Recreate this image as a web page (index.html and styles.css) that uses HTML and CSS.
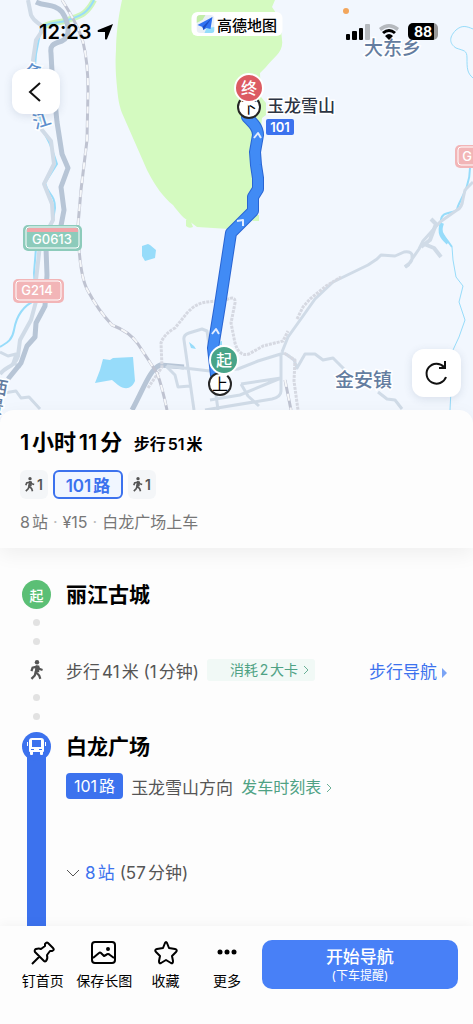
FILE: index.html
```html
<!DOCTYPE html>
<html lang="zh-CN">
<head>
    <meta charset="utf-8">
    <meta name="viewport" content="width=device-width, initial-scale=1.0">
    <title>公交路线详情</title>
    <link rel="stylesheet" href="styles.css">
</head>
<body>
<div class="m-page">
    <div class="m-map">
        <svg class="map-canvas" viewBox="0 0 473 422">
            <rect class="land" width="473" height="422"/>
            <!-- 绿地 -->
            <path class="park" d="M122 0C118 18 116 36 116 50C115 66 116 76 117 87C118 98 119 105 122 113L147 170C155 186 164 198 173 205C179 213 184 219 189 221L197 227L229 229L257 219L258 160L262 118L266 115V103L261 97L260 73L266 67C273 58 284 52 282 40C281 28 280 18 272 7L275 0Z"/>
            <path class="park" d="M186 220q4-3 5 2l2 5q-4 2-7-1zM252 215h7v6h-6z"/>
            <!-- 河流湖泊 -->
            <path class="lake" d="M142 246l6-2 2 1 6 5-1 8-10 3-3-5zM103 359l7 1 3-2 20-1 1 12 1 12c-3 7-9 10-17 4l-6-5-17 3 5-13zM189 342l5 4 2 3-5-1zM219 342l3-1v4h-3z"/>
            <path class="grass-river" d="M94 0C86 16 78 16 68 20C58 24 50 21 42 28"/>
            <path class="river w2" d="M94 0C86 16 78 16 68 20C58 24 50 21 41 28L36 54L34 80L42 130C52 144 54 156 57 164L45 183C48 195 55 194 55 208L53 220L36 248L34 273L36 300C22 306 16 318 14 330C12 342 4 344 0 347"/>
            <path class="river w1" d="M473 29C466 26 462 25 456 30C448 38 450 44 456 48C464 51 467 50 467 58C467 68 467 73 473 78"/>
            <path class="river w2" d="M470 168C470 190 457 203 457 210C452 214 442 211 441 220C438 232 446 238 452 247"/>
            <path class="river w4" d="M442 223C438 234 443 238 448 243"/>
            <path class="river w1" d="M452 247L453 260L456 277L463 286L459 302L465 320L459 337L453 350L450 410"/>
            <!-- 道路 -->
            <path class="road w4" d="M28 0L31 15C36 26 44 22 42 31L36 40L33 60L37 120L42 130L51 141L54 164L44 184L52 204L53 220L40 245L36 280L38 294L31 320L20 340L18 356C14 368 6 366 0 374"/>
            <path class="road w3" d="M0 352l8 4 8-2-3 9 8 4M4 393l12-2 5 7 8-1 11 12"/>
            <path class="road strong w5" d="M36 2C46 7 54 3 62 12C68 21 72 36 62 41C52 44 50 46 51 53L52 72L57 122L62 154L68 168L61 187L64 210L60 231L46 248L47 275L45 306L36 323L35 337L27 346L21 363L8 379"/>
            <path class="road strong w5" d="M132 410C143 390 150 369 160 365L184 367"/>
            <path class="road w3" d="M166 366L175 375L178 387L190 386M194 410L184 340Q183 335 189 333L202 329L207 331L214 380L218 410M167 366L210 371L238 369L258 361L284 353M210 400L240 395L281 378M281 355V391Q281 397 272 399L205 410M241 384L281 378M241 384L248 396L259 406"/>
            <path class="road w3" d="M282 352L288 337L303 316L315 299L333 282L368 265L377 259L381 255L395 256L404 252Q413 251 412 257Q413 262 405 267M408 265L419 249L423 241L440 222L457 210Q462 208 463 199L465 190L473 182"/>
            <path class="road w4" d="M421 247L430 240L436 224L431 219M424 244L434 248L441 257M405 267l4-3"/>
            <path class="road w3" d="M286 354L294 360L297 368L305 354L315 354L323 360L333 358L344 369M378 392L387 399L395 400L402 409"/>
            <path class="track w3" d="M148 388L162 367L161 343Q164 334 175 328L187 313Q196 303 207 302L226 300Q236 295 235 303L231 323L235 343Q239 357 249 354L263 346L283 341L288 331M297 319L303 307L310 299L326 286L341 277M284 353L295 360L294 381L298 410"/>
            <!-- 铁路 -->
            <path class="rail" d="M62 0Q78 25 83 42Q88 62 88 90L87 140L81 190L78 225Q79 276 88 291Q98 310 112 325Q130 332 138 344L157 373Q162 386 167 410M285 380L291 410"/>
            <path class="rail-dash" d="M62 0Q78 25 83 42Q88 62 88 90L87 140L81 190L78 225Q79 276 88 291Q98 310 112 325Q130 332 138 344L157 373Q162 386 167 410M285 380L291 410"/>
            <!-- 地名 -->
            <text class="place" x="335" y="387">金安镇</text>
            <text class="place" x="364" y="55">大东乡</text>
            <text class="water-name" transform="translate(26 80) rotate(-12)">金</text>
            <text class="water-name" transform="translate(35 129) rotate(-18)">江</text>
            <text class="side-name" transform="translate(-11 392) rotate(10)">西</text>
            <text class="side-name" transform="translate(-15 411) rotate(10)">景</text>
            <circle class="poi" cx="346" cy="11" r="3"/>
            <!-- 道路编号 -->
            <g class="shield green">
                <rect x="23" y="225" width="59" height="26" rx="5"/>
                <rect class="inner" x="26" y="227" width="53" height="21" rx="3"/>
                <path class="red-top" d="M27 232v-2q0-2 2-2h47q2 0 2 2v2z"/>
                <text x="52" y="244">G0613</text>
            </g>
            <g class="shield red">
                <rect x="13" y="279" width="51" height="24" rx="5"/>
                <rect class="inner" x="16" y="281" width="45" height="19" rx="3"/>
                <text x="37" y="295">G214</text>
            </g>
            <g class="shield red">
                <rect x="455" y="145" width="51" height="23" rx="5"/>
                <rect class="inner" x="458" y="147" width="45" height="18" rx="3"/>
                <text x="467" y="161">G</text>
            </g>
            <!-- 公交线路 -->
            <path class="route-edge" d="M247 117C254 124 258 128 258 135L255 152L256 165L258 178V189L253 197L253 211L240 224L231 233L220 305L213 348L216 375"/>
            <path class="route" d="M247 117C254 124 258 128 258 135L255 152L256 165L258 178V189L253 197L253 211L240 224L231 233L220 305L213 348L216 375"/>
            <path class="route-arrow" d="M254 138l4-5 3 5M237 221l6-1v6M212 334l4-5 3 5"/>
            <text class="stop-name" x="267" y="112">玉龙雪山</text>
            <rect class="line-tag" x="266" y="119" width="28" height="16" rx="2"/>
            <text class="line-no" x="280" y="132">101</text>
            <circle class="stop" cx="249" cy="107" r="11"/>
            <text class="stop-text" x="249" y="113">下</text>
            <path class="pin-tip" d="M242 100h14l-7 6z"/>
            <circle class="pin end" cx="249" cy="88" r="14"/>
            <text class="pin-text" x="249" y="94">终</text>
            <circle class="stop" cx="220" cy="384" r="11"/>
            <text class="stop-text" x="220" y="390">上</text>
            <path class="pin-tip" d="M217 372h14l-7 7z"/>
            <circle class="pin start" cx="224" cy="360" r="14"/>
            <text class="pin-text" x="224" y="366">起</text>
        </svg>
        <div class="m-status">
            <div class="clock">
                <span>12:23</span>
                <svg width="17" height="17" viewBox="0 0 17 17"><path d="M16 1L1 7Q0 8 1 9L8 9L8 16Q9 17 10 16Z"/></svg>
            </div>
            <div class="signals">
                <svg width="24" height="16" viewBox="0 0 24 16"><rect x="0" y="10" width="4" height="6" rx="1"/><rect x="6" y="7" width="5" height="9" rx="1"/><rect x="13" y="4" width="4" height="12" rx="1"/><rect class="dim" x="19" y="0" width="5" height="16" rx="1"/></svg>
                <svg width="20" height="16" viewBox="0 0 20 16"><path class="dim" d="M0 4Q10-4 20 4L18 7Q10 0 2 7Z"/><path d="M3 8Q10 2 17 8L15 10Q10 6 5 10ZM6 12Q10 8 14 12L10 16Z"/></svg>
                <span class="battery">88</span>
            </div>
        </div>
        <div class="m-brand">
            <svg width="18" height="18" viewBox="0 0 18 18"><rect width="18" height="18" rx="4" fill="#e9eff6"/><path d="M0 8V4Q0 0 4 0h5L6 5Z" fill="#c3eda9"/><path d="M8 18l2-5 8-1v3q0 3-3 3Z" fill="#94dcfb"/><path d="M16 2L1 10l5 2 1 3 3-2 4 1Z" fill="#2f72f2"/><path d="M16 2L6 12l1 3 2-3Z" fill="#1b4fc4"/></svg>
            <span>高德地图</span>
        </div>
        <button class="m-btn m-back" type="button" aria-label="返回">
            <svg width="24" height="24" viewBox="0 0 24 24"><path d="M16 3L6 12L16 21"/></svg>
        </button>
        <button class="m-btn m-refresh" type="button" aria-label="刷新">
            <svg width="26" height="26" viewBox="0 0 26 26"><path d="M22 17A10 10 0 1 1 20 7M21 1v7h-6"/></svg>
        </button>
    </div>

    <div class="m-summary">
        <h1>1小时11分 <small>步行51米</small></h1>
        <div class="chips">
            <span class="chip"><svg width="10" height="15" viewBox="0 0 12 18"><use href="#walker"/></svg>1</span>
            <button class="chip active" type="button">101路</button>
            <span class="chip"><svg width="10" height="15" viewBox="0 0 12 18"><use href="#walker"/></svg>1</span>
        </div>
        <p>8站<i>·</i>¥15<i>·</i>白龙广场上车</p>
    </div>

    <div class="m-detail">
        <div class="row">
            <div class="axis"><span class="node">起</span><i class="dot"></i><i class="dot"></i></div>
            <h2>丽江古城</h2>
        </div>
        <div class="row walk">
            <div class="axis">
                <svg width="14" height="20" viewBox="0 0 12 18">
                    <g id="walker"><circle cx="6" cy="2" r="2"/><path class="limb" d="M6 5L5 11L8 14L9 17M5 10L4 14L1 17M6 6L2 7L1 10M7 6L8 8L11 9"/><path d="M5 5h3v6H4z"/></g>
                </svg>
                <i class="dot"></i><i class="dot"></i>
            </div>
            <div class="line">
                <span>步行41米 (1分钟)</span>
                <a class="calorie" href="#">消耗2大卡<svg width="6" height="10" viewBox="0 0 6 10"><path d="M1 1l4 4-4 4"/></svg></a>
                <a class="nav-link" href="#">步行导航<svg width="5" height="10" viewBox="0 0 5 10"><path d="M0 0l5 5-5 5z"/></svg></a>
            </div>
        </div>
        <div class="row ride">
            <div class="axis">
                <span class="node bus"><svg width="19" height="17" viewBox="0 0 19 17"><path d="M5 0h9q3 0 3 3v10q0 1-1 1v2q0 1-1 1h-1q-1 0-1-1v-2H6v2q0 1-1 1H4q-1 0-1-1v-2q-1 0-1-1V3q0-3 3-3zM0 4h1v4H0zM18 4h1v4h-1z"/><path class="hole" d="M5 2h9v7H5zM4 11h3v1H4zM12 11h3v1h-3z"/></svg></span>
                <i class="track-line"></i>
            </div>
            <div>
                <h2>白龙广场</h2>
                <div class="line"><span class="tag">101路</span><span>玉龙雪山方向</span><a class="timetable" href="#">发车时刻表<svg width="6" height="10" viewBox="0 0 6 10"><path d="M1 1l4 4-4 4"/></svg></a></div>
                <button class="stations" type="button"><svg width="14" height="8" viewBox="0 0 14 8"><path d="M1 1l6 6 6-6"/></svg><b>8站</b> (57分钟)</button>
            </div>
        </div>
    </div>

    <div class="m-bar">
        <div class="tools">
            <button type="button"><svg width="26" height="26" viewBox="0 0 26 26"><path d="M16 3Q17 2 18 3L23 8Q25 10 22 11H20L17 15Q18 19 16 21Q15 22 14 21L5 12Q4 10 6 9Q9 8 11 9L15 6V4ZM9 17L2 24"/></svg>钉首页</button>
            <button type="button"><svg width="26" height="26" viewBox="0 0 26 26"><rect x="1" y="2" width="23" height="21" rx="3"/><path d="M2 18L8 13Q9 12 10 13L13 16L15 15Q17 13 19 15L23 18"/><circle class="fill" cx="17" cy="9" r="1"/></svg>保存长图</button>
            <button type="button"><svg width="26" height="26" viewBox="0 0 26 26"><path d="M12 3Q13 1 14 3L16 8L22 9Q25 10 23 12L19 16L20 21Q20 24 18 23L13 20L8 23Q6 24 6 21L7 16L3 12Q1 10 4 9L10 8Z"/></svg>收藏</button>
            <button type="button"><svg class="more" width="26" height="26" viewBox="0 0 26 26"><circle cx="6" cy="12" r="2.500"/><circle cx="13" cy="12" r="2.500"/><circle cx="20" cy="12" r="2.500"/></svg>更多</button>
        </div>
        <button class="go" type="button"><strong>开始导航</strong><span>(下车提醒)</span></button>
    </div>
</div>
</body>
</html>
```
FILE: styles.css
```css
*{box-sizing: border-box;}
html{margin: 0; padding: 0;}
body{margin: 0; padding: 0; background: #fdfdfd; color: #000; font-family: Inter, "Noto Sans CJK SC", sans-serif; font-size: 16px; text-autospace: normal;}
button{border: 0; padding: 0; background: none; color: inherit; font-family: inherit; cursor: pointer;}
a{text-decoration: none;}
i{font-style: normal;}
h1,h2,p{margin: 0;}
.m-page{display: flex; flex-direction: column; height: 100vh;}

/* 地图 */
.m-map{position: relative; flex: none;}
.map-canvas{display: block; width: 100%; height: auto;}
.map-canvas path{fill: none; stroke-linejoin: round;}
.land{fill: #f2f7fe;}
.map-canvas .park{fill: #d4fac0;}
.map-canvas .lake{fill: #97dcfa;}
.river{stroke: #97dcfa;}
.grass-river{stroke: #cdf5bb; stroke-width: 6;}
.road{stroke: #d0dbe7;}
.strong{stroke: #b7c5d6;}
.w1{stroke-width: 1;}
.w2{stroke-width: 2;}
.w3{stroke-width: 3;}
.w4{stroke-width: 4;}
.w5{stroke-width: 5;}
.track{stroke: #d6d9e2; stroke-dasharray: 3 1;}
.rail{stroke: #bfc3d1; stroke-width: 3;}
.rail-dash{stroke: #f6f7f9; stroke-width: 2; stroke-dasharray: 7 7;}
.place,.water-name,.side-name,.stop-name{stroke: #fff; stroke-width: 3; paint-order: stroke; font-weight: 500;}
.place{font-size: 19px; fill: #647da0;}
.water-name{font-size: 18px; fill: #5e90ce;}
.side-name{font-size: 18px; fill: #647da0;}
.stop-name{font-size: 17px; fill: #2c3443;}
.poi{fill: #f3a65c;}
.shield text{font-size: 13px; font-weight: 500; fill: #fff; text-anchor: middle;}
.shield .inner{stroke: #fff; stroke-width: 1;}
.green rect{fill: #8dcbbb;}
.red rect{fill: #f2b5b7;}
.map-canvas .red-top{fill: #f1a5a9;}
.route-edge{stroke: #2965d3; stroke-width: 12; stroke-linecap: round;}
.route{stroke: #418bf5; stroke-width: 10; stroke-linecap: round;}
.map-canvas .route-arrow{stroke: #e3edff; stroke-width: 2;}
.line-tag{fill: #3c72ee;}
.line-no{font-size: 13px; font-weight: 600; fill: #fff; text-anchor: middle;}
.stop{fill: #fff; stroke: #262626; stroke-width: 2;}
.stop-text{font-size: 16px; text-anchor: middle;}
.map-canvas .pin-tip{fill: #fff;}
.pin{stroke: #fff; stroke-width: 2;}
.end{fill: #dc5b62;}
.start{fill: #48a488;}
.pin-text{font-size: 16px; font-weight: 500; fill: #fff; text-anchor: middle;}
.m-status{position: absolute; top: 20px; left: 39px; right: 32px; display: flex; justify-content: space-between; height: 23px;}
.clock,.signals{display: flex; align-items: center;}
.clock{gap: 6px; font-size: 20px; font-weight: 600;}
.signals{gap: 9px; padding-right: 3px;}
.dim{opacity: 0.25;}
.battery{width: 30px; height: 17px; line-height: 17px; border-radius: 5px; background: linear-gradient(90deg, #000 88%, #999 88%); color: #fff; font-size: 14px; font-weight: 700; text-align: center;}
.m-brand{position: absolute; top: 12px; left: 50%; display: flex; align-items: center; gap: 3px; height: 24px; padding: 0 5px; border-radius: 6px; background: #fff; font-size: 15px; font-weight: 500; transform: translateX(-50%); white-space: nowrap;}
.m-btn{position: absolute; display: flex; align-items: center; justify-content: center; border-radius: 12px; background: #fff; box-shadow: 0 2px 8px rgba(60,80,110,0.14);}
.m-btn svg{fill: none; stroke: #111; stroke-width: 2;}
.m-back{top: 69px; left: 12px; width: 48px; height: 45px;}
.m-refresh{right: 12px; bottom: 25px; width: 49px; height: 48px;}

/* 方案概要 */
.m-summary{position: relative; flex: none; margin-top: -12px; padding: 16px 20px 14px; border-radius: 14px 14px 0 0; background: #fdfdfd; box-shadow: 0 6px 20px rgba(0,0,0,0.06);}
.m-summary h1{font-size: 22px; line-height: 32px; font-weight: 600;}
.m-summary small{margin-left: 6px; font-size: 16px;}
.chips{display: flex; gap: 5px; margin-top: 10px;}
.chip{display: flex; align-items: center; justify-content: center; gap: 2px; width: 28px; height: 29px; border-radius: 6px; background: #f4f6f8; color: #555; font-size: 14px; font-weight: 600;}
.chip svg{fill: #555;}
.limb{fill: none; stroke: #555; stroke-width: 2;}
.active{width: 70px; border: 2px solid #3c72ee; background: #f0f6ff; color: #3c72ee; font-size: 17px;}
.m-summary p{margin-top: 11px; font-size: 16px; line-height: 24px; color: #777;}
.m-summary p i{margin: 0 5px; color: #bbb;}

/* 行程 */
.m-detail{flex: 1; display: flex; flex-direction: column; min-height: 0; padding: 32px 26px 0 22px; overflow: hidden;}
.row{display: grid; grid-template-columns: 29px 1fr; gap: 15px;}
.axis{display: flex; flex-direction: column; align-items: center; gap: 12px;}
.axis svg{fill: #555;}
.node{display: flex; align-items: center; justify-content: center; width: 29px; height: 29px; flex: none; border-radius: 50%; background: #5bbf75; color: #fff; font-size: 14px; font-weight: 500;}
.dot{width: 7px; height: 7px; flex: none; border-radius: 50%; background: #e2e2e2;}
.dot:nth-of-type(1){margin-top: -2px;}
.row h2{font-size: 21px; line-height: 29px; font-weight: 600;}
.line{display: flex; align-items: center; height: 26px; color: #555; font-size: 17px; white-space: nowrap;}
.line svg{margin-left: 5px;}
.walk{margin-top: 12px;}
.walk .axis{padding-top: 3px;}
.walk .axis svg{margin-bottom: 4px;}
.calorie,.timetable{margin-left: 8px; color: #4fa284; font-size: 16px;}
.calorie{height: 22px; padding: 0 6px 0 23px; border-radius: 3px; background: #f1f9f6; font-size: 14px; line-height: 22px;}
.calorie svg,.timetable svg,.stations svg{fill: none; stroke: #6aaf96; stroke-width: 1;}
.nav-link{margin-left: auto; color: #3c72ee;}
.nav-link svg{fill: #7ba4f5;}
.ride{flex: 1; margin-top: 12px;}
.bus{z-index: 1; background: #3c72ee;}
.axis .bus svg{fill: #fff;}
.bus .hole{fill: #3c72ee;}
.ride .axis{gap: 0;}
.track-line{flex: 1; width: 19px; margin-top: -6px; background: #3c72ee;}
.ride .line{margin-top: 12px;}
.tag{height: 26px; margin-right: 8px; padding: 0 8px; border-radius: 4px; background: #3c72ee; color: #fff; font-size: 16px; line-height: 26px;}
.stations{display: flex; align-items: center; gap: 5px; margin-top: 61px; color: #555; font-size: 17px; line-height: 26px;}
.stations svg{stroke: #555;}
.stations b{color: #3c72ee; font-weight: 400;}

/* 底部操作栏 */
.m-bar{z-index: 2; display: flex; flex: none; align-items: flex-start; gap: 4px; padding: 14px 15px 34px 12px; background: #fdfdfd; box-shadow: 0 -2px 10px rgba(0,0,0,0.04);}
.tools{display: grid; flex: 1; grid-template-columns: repeat(4, 1fr);}
.tools button{display: flex; flex-direction: column; align-items: center; gap: 5px; font-size: 14px; line-height: 19px; white-space: nowrap;}
.tools svg{fill: none; stroke: #000; stroke-width: 2; stroke-linejoin: round;}
.tools .fill{fill: #000;}
.tools .more{fill: #000; stroke: none;}
.go{display: flex; flex-direction: column; align-items: center; justify-content: center; width: 44%; height: 49px; border-radius: 10px; background: #4880f7; color: #fff;}
.go strong{font-size: 17px; line-height: 22px; font-weight: 500;}
.go span{font-size: 12px; line-height: 15px;}
```
